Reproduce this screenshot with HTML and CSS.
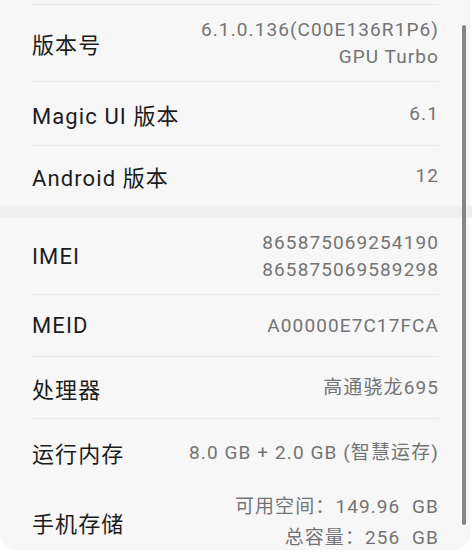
FILE: index.html
```html
<!DOCTYPE html>
<html lang="zh-CN">
<head>
  <meta charset="UTF-8">
  <meta name="viewport" content="width=device-width, initial-scale=1.0">
  <title>关于手机</title>
  <link rel="stylesheet" href="styles.css">
</head>
<body>
  <div class="page">
    <div class="card card-top">
      <div class="row row-tall">
        <span class="label">版本号</span>
        <span class="value">6.1.0.136(C00E136R1P6)<br>GPU Turbo</span>
      </div>
      <div class="row">
        <span class="label">Magic UI 版本</span>
        <span class="value">6.1</span>
      </div>
      <div class="row row-last">
        <span class="label">Android 版本</span>
        <span class="value">12</span>
      </div>
    </div>

    <div class="gap"></div>

    <div class="card card-bottom">
      <div class="row row-tall">
        <span class="label">IMEI</span>
        <span class="value">865875069254190<br>865875069589298</span>
      </div>
      <div class="row row-short">
        <span class="label">MEID</span>
        <span class="value">A00000E7C17FCA</span>
      </div>
      <div class="row row-short">
        <span class="label">处理器</span>
        <span class="value">高通骁龙695</span>
      </div>
      <div class="row row-plain">
        <span class="label">运行内存</span>
        <span class="value">8.0 GB + 2.0 GB (智慧运存)</span>
      </div>
      <div class="row row-storage">
        <span class="label">手机存储</span>
        <span class="value">可用空间：149.96&nbsp; GB<br>总容量：256&nbsp; GB</span>
      </div>
    </div>

    <div class="scrollbar"></div>
  </div>
</body>
</html>
```

FILE: styles.css
```css
body {
  margin: 0;
  background: #fff;
  font-family: Roboto, "Noto Sans CJK SC", sans-serif;
}
.page {
  position: relative;
  width: 472px;
  height: 560px;
  overflow: hidden;
}
.card {
  background: #f7f7f7;
  width: 470px;
  box-sizing: border-box;
  padding: 0 31px 0 32px;
}
.card-top {
  padding-top: 4px;
}
.card-top .row-tall {
  border-top: 1px solid #e9e9e9;
}
.card-bottom {
  border-radius: 0 0 16px 16px;
  height: 332px;
}
.gap {
  height: 13px;
  background: linear-gradient(#f3f3f3, #eeeeee 40%, #f1f1f1);
}
.row {
  display: flex;
  justify-content: space-between;
  align-items: center;
  height: 63px;
  border-bottom: 1px solid #e9e9e9;
}
.row-tall {
  height: 76px;
}
.row-short {
  height: 61px;
}
.row-last {
  height: 59px;
  border-bottom: 0;
}
.row-plain {
  height: 66px;
  border-bottom: 0;
}
.row-storage {
  height: 54px;
  padding-top: 10px;
  border-bottom: 0;
}
.label {
  font-size: 22px;
  letter-spacing: 1.1px;
  color: #1c1c1c;
}
.value {
  font-size: 19px;
  letter-spacing: 1.1px;
  line-height: 27px;
  color: #747474;
  text-align: right;
}
.row-storage .value {
  line-height: 31px;
}
.scrollbar {
  position: absolute;
  left: 462px;
  top: 25px;
  width: 4px;
  height: 500px;
  border-radius: 2px;
  background: #858585;
}
```
